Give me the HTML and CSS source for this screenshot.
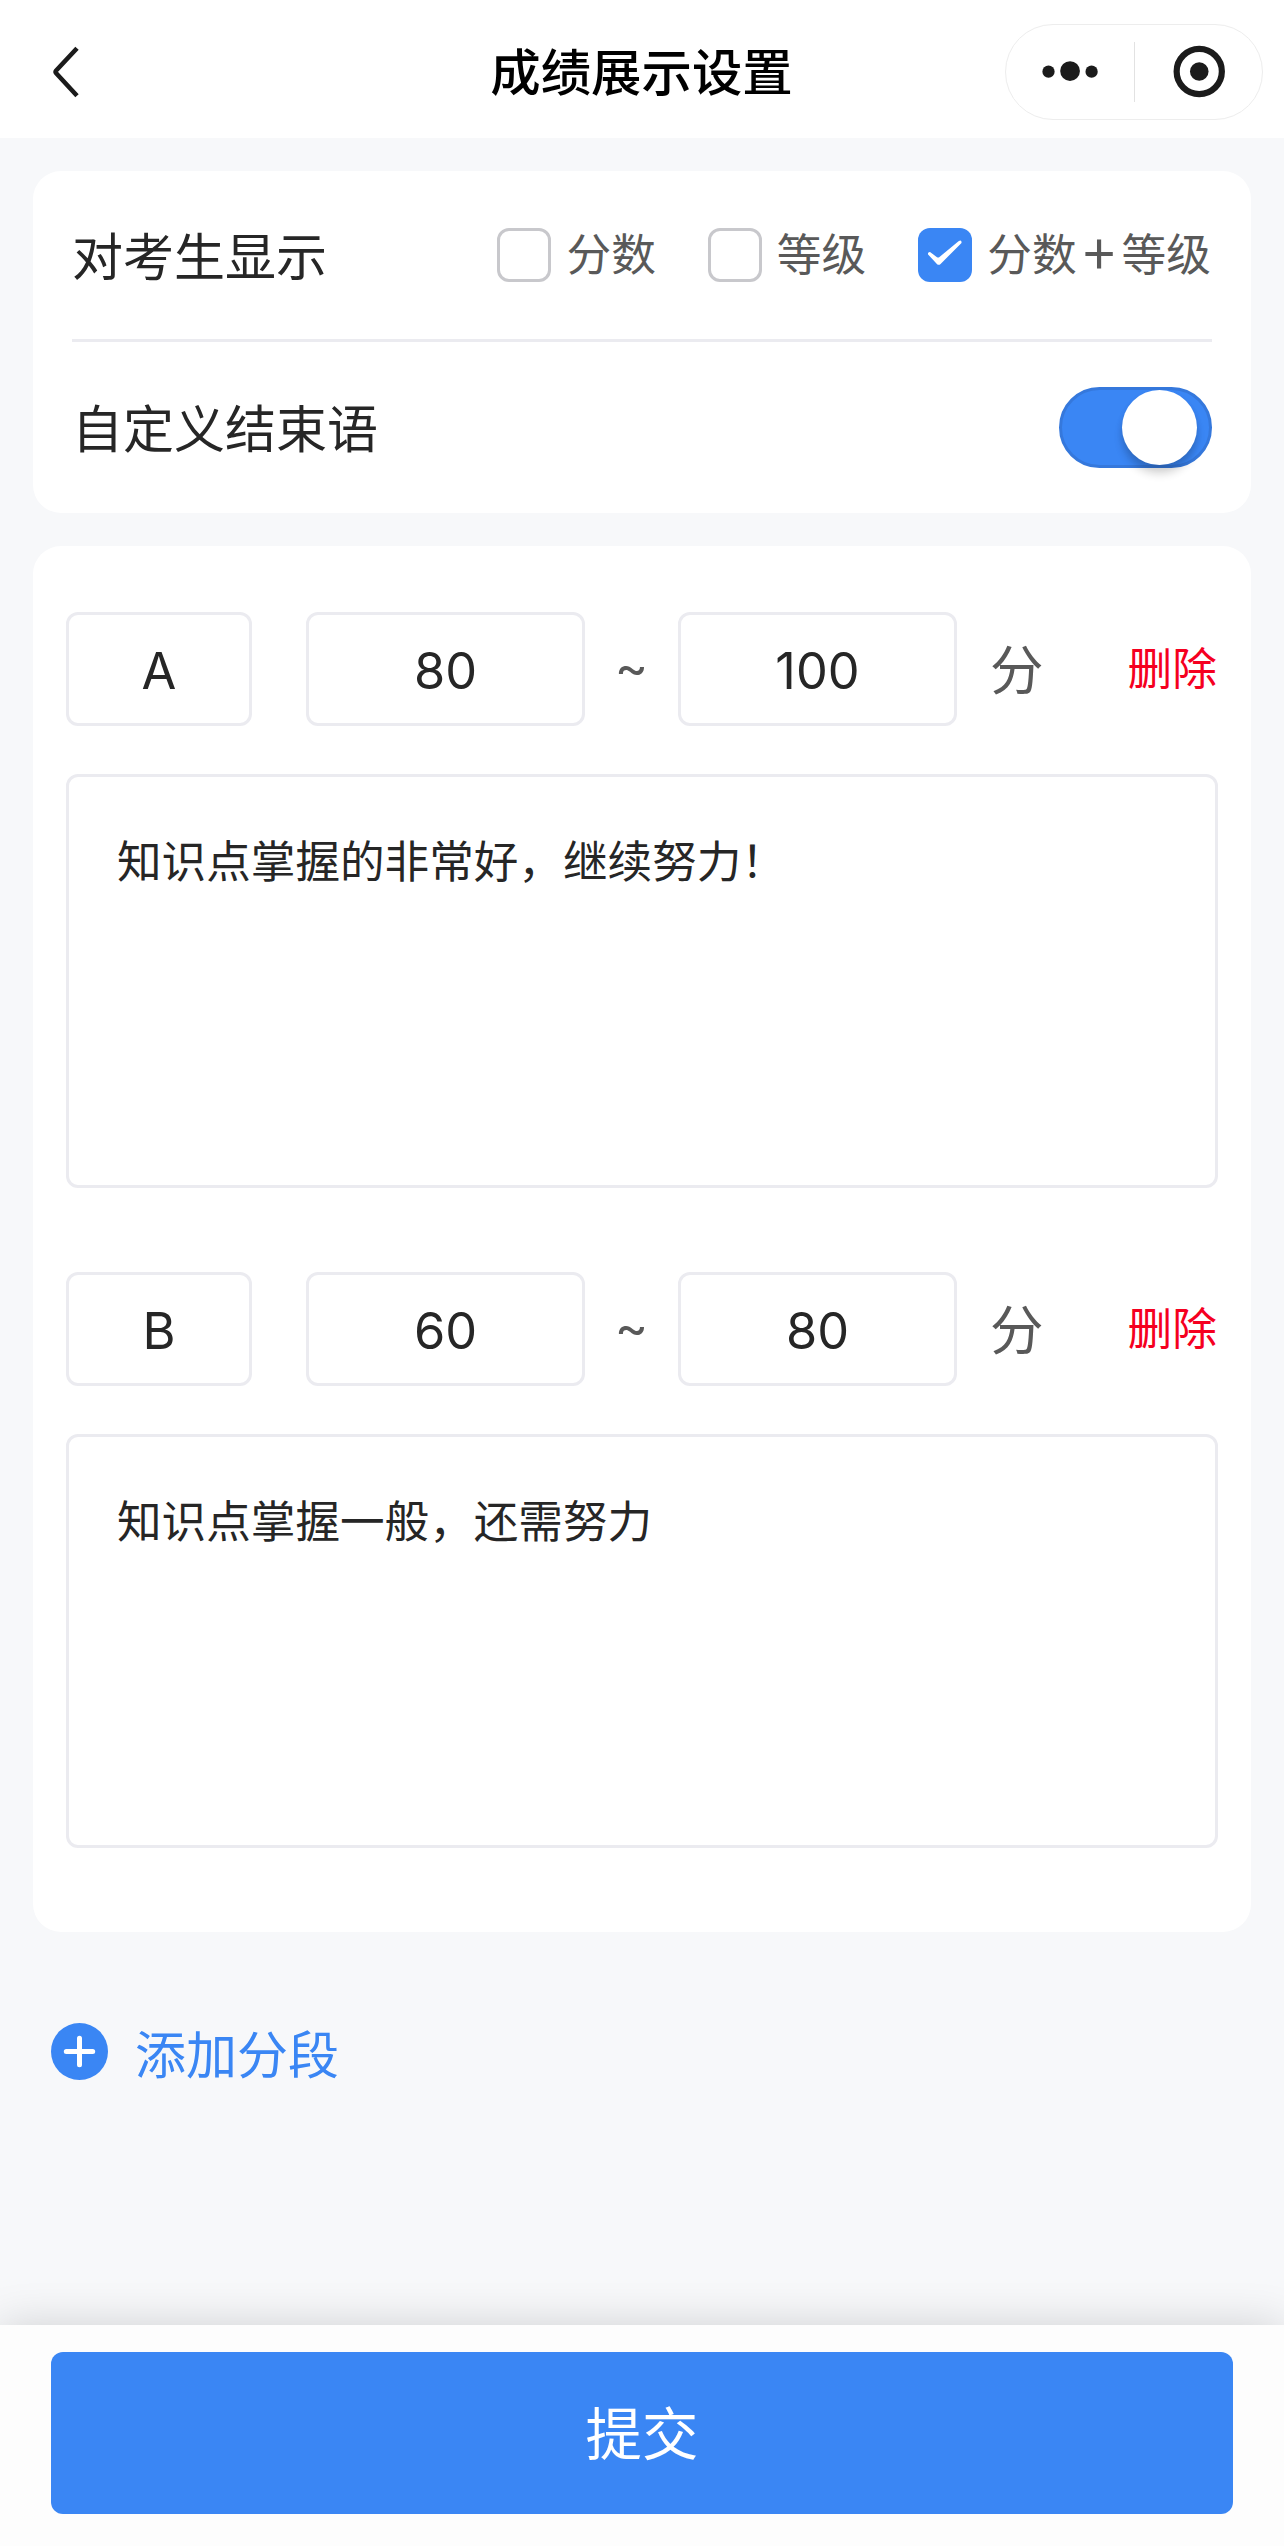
FILE: index.html
```html
<!DOCTYPE html>
<html lang="zh-CN">
<head>
<meta charset="utf-8">
<title>成绩展示设置</title>
<link rel="stylesheet" href="styles.css">
</head>
<body>
<div class="page">
  <header class="navbar">
    <svg class="back" width="36" height="60" viewBox="0 0 36 60" fill="none" stroke="#1b1b1b" stroke-width="4.6" stroke-linejoin="round"><path d="M29 6.300L8.200 28.500Q7 29.900 8.200 31.300L29 53.700"/></svg>
    <h1 class="title">成绩展示设置</h1>
    <div class="capsule">
      <svg class="capsule-icon" width="129" height="96" viewBox="0 0 129 96" fill="#1b1b1b"><circle cx="43" cy="47.700" r="6.200"/><circle cx="64.800" cy="47" r="10"/><circle cx="86.600" cy="47.700" r="6.200"/></svg>
      <span class="capsule-line"></span>
      <svg class="capsule-icon" width="127" height="96" viewBox="0 0 127 96"><circle cx="64" cy="47.500" r="22.600" fill="none" stroke="#1b1b1b" stroke-width="6.200"/><circle cx="64" cy="47.500" r="9.300" fill="#1b1b1b"/></svg>
    </div>
  </header>

  <main class="content">
    <section class="card settings">
      <div class="setting setting-display">
        <span class="label">对考生显示</span>
        <div class="options">
          <div class="option"><span class="box"></span><span class="option-text">分数</span></div>
          <div class="option"><span class="box"></span><span class="option-text">等级</span></div>
          <div class="option">
            <span class="box checked"><svg width="54" height="54" viewBox="0 0 54 54" fill="#fff"><path d="M10.100 26.600Q9.400 23.900 12 24L19 29.200Q20.200 30 21.500 29L40.500 13.200Q43.900 11.300 43.500 15L22.600 35.900Q20.700 37.600 18.900 35.900Z"/></svg></span>
            <span class="option-text">分数<span class="plus">+</span>等级</span>
          </div>
        </div>
      </div>
      <div class="setting setting-ending">
        <span class="label">自定义结束语</span>
        <span class="switch"><span class="knob"></span></span>
      </div>
    </section>

    <section class="card ranges">
      <div class="range">
        <div class="range-row">
          <div class="field grade">A</div>
          <div class="field score">80</div>
          <span class="tilde">~</span>
          <div class="field score">100</div>
          <span class="unit">分</span>
          <span class="remove">删除</span>
        </div>
        <div class="comment">知识点掌握的非常好，继续努力！</div>
      </div>
      <div class="range">
        <div class="range-row">
          <div class="field grade">B</div>
          <div class="field score">60</div>
          <span class="tilde">~</span>
          <div class="field score">80</div>
          <span class="unit">分</span>
          <span class="remove">删除</span>
        </div>
        <div class="comment">知识点掌握一般，还需努力</div>
      </div>
    </section>

    <div class="add">
      <svg width="57" height="57" viewBox="0 0 57 57"><circle cx="28.500" cy="28.500" r="28.500" fill="#3a86f4"/><path d="M15.300 28.500H41.700M28.500 15.300V41.700" stroke="#fff" stroke-width="5" stroke-linecap="round"/></svg>
      <span class="add-text">添加分段</span>
    </div>
  </main>

  <footer class="footer">
    <div class="submit">提交</div>
  </footer>
</div>
</body>
</html>
```
FILE: styles.css
```css
* {
  box-sizing: border-box;
}

body {
  margin: 0;
  background: #f7f8fa;
  color: #262626;
  font-family: "Noto Sans CJK SC", sans-serif;
}

.page {
  display: flex;
  flex-direction: column;
  width: 1284px;
  height: 2546px;
  overflow: hidden;
}

/* Navigation bar */
.navbar {
  display: grid;
  grid-template-columns: 279px 1fr 279px;
  align-items: center;
  height: 138px;
  padding: 6px 21px 0 0;
  background: #fff;
}

.back {
  margin-left: 48px;
}

.title {
  margin: 0;
  padding: 0 0 4px 20px;
  color: #000;
  font-size: 50.4px;
  font-weight: 500;
  line-height: 72px;
  text-align: center;
  white-space: nowrap;
}

.capsule {
  display: flex;
  align-items: center;
  justify-self: end;
  width: 258px;
  height: 96px;
  border: 1px solid #ededed;
  border-radius: 48px;
}

.capsule-icon {
  flex: 1 1 0;
  min-width: 0;
}

.capsule-line {
  width: 1px;
  height: 60px;
  background: #e2e2e2;
}

/* Cards */
.content {
  flex: 1;
  padding: 33px 33px 0;
}

.card {
  border-radius: 28px;
  background: #fff;
}

.settings {
  height: 342px;
  padding: 0 39px;
}

.setting {
  display: flex;
  align-items: center;
  justify-content: space-between;
}

.setting-display {
  height: 171px;
  border-bottom: 3px solid #ebebf0;
}

.setting-ending {
  height: 171px;
}

.label {
  padding-bottom: 3px;
  font-size: 51px;
  line-height: 72px;
}

.options {
  display: flex;
  gap: 51px;
}

.option {
  display: flex;
  align-items: center;
  gap: 15px;
  color: #595959;
  font-size: 44.7px;
  line-height: 54px;
}

.option-text {
  height: 60px;
  padding-right: 1px;
  white-space: nowrap;
}

.plus {
  display: inline-block;
  width: 45px;
  height: 54px;
  font-size: 57px;
  line-height: 51px;
  text-align: center;
  vertical-align: top;
}

.box {
  width: 54px;
  height: 54px;
  border: 3px solid #c8c8cc;
  border-radius: 12px;
}

.box.checked {
  border: 0;
  background: #3a86f4;
}

.box svg {
  display: block;
}

.switch {
  display: flex;
  justify-content: flex-end;
  width: 153px;
  height: 81px;
  padding-right: 12px;
  border: 3px solid #3578dc;
  border-radius: 41px;
  background: #3a86f4;
}

.knob {
  width: 75px;
  height: 75px;
  border-radius: 50%;
  background: #fff;
  box-shadow: 0 9px 9px rgba(0, 0, 0, .16), 0 3px 6px rgba(0, 0, 0, .08);
}

/* Score ranges */
.ranges {
  display: flex;
  flex-direction: column;
  gap: 84px;
  height: 1386px;
  margin-top: 33px;
  padding: 66px 33px 0;
}

.range {
  display: flex;
  flex-direction: column;
  gap: 48px;
}

.range-row {
  display: grid;
  grid-template-columns: 186px 54px 279px 93px 279px 33px 56px 1fr;
  align-items: center;
  height: 114px;
}

.field {
  height: 114px;
  border: 3px solid #ebebf0;
  border-radius: 12px;
  font-family: Inter, sans-serif;
  font-size: 50.5px;
  line-height: 111px;
  text-align: center;
}

.grade {
  grid-column: 1;
}

.grade + .score {
  grid-column: 3;
}

.tilde {
  padding-bottom: 6px;
  color: #595959;
  font-family: Inter, sans-serif;
  font-size: 50.5px;
  text-align: center;
}

.unit {
  grid-column: 7;
  padding-bottom: 4px;
  color: #595959;
  font-size: 53.5px;
  line-height: 72px;
}

.remove {
  padding: 0 1px 6px 0;
  color: #f5001f;
  font-size: 44.7px;
  line-height: 60px;
  text-align: right;
}

.comment {
  height: 414px;
  padding: 50px 48px;
  border: 3px solid #ebebf0;
  border-radius: 12px;
  font-size: 44.6px;
  line-height: 63px;
}

/* Add button */
.add {
  display: flex;
  align-items: center;
  gap: 27px;
  margin-top: 82px;
  padding-left: 18px;
  color: #3a86f4;
}

.add-text {
  padding-top: 2px;
  font-size: 51px;
  line-height: 72px;
}

/* Submit bar */
.footer {
  height: 221px;
  padding: 27px 51px 0;
  background: #fdfdfd;
  box-shadow: 0 0 42px rgba(0, 0, 0, .16);
}

.submit {
  height: 162px;
  border-radius: 12px;
  background: #3a86f4;
  color: #fff;
  font-size: 56.4px;
  line-height: 158px;
  text-align: center;
}
```
